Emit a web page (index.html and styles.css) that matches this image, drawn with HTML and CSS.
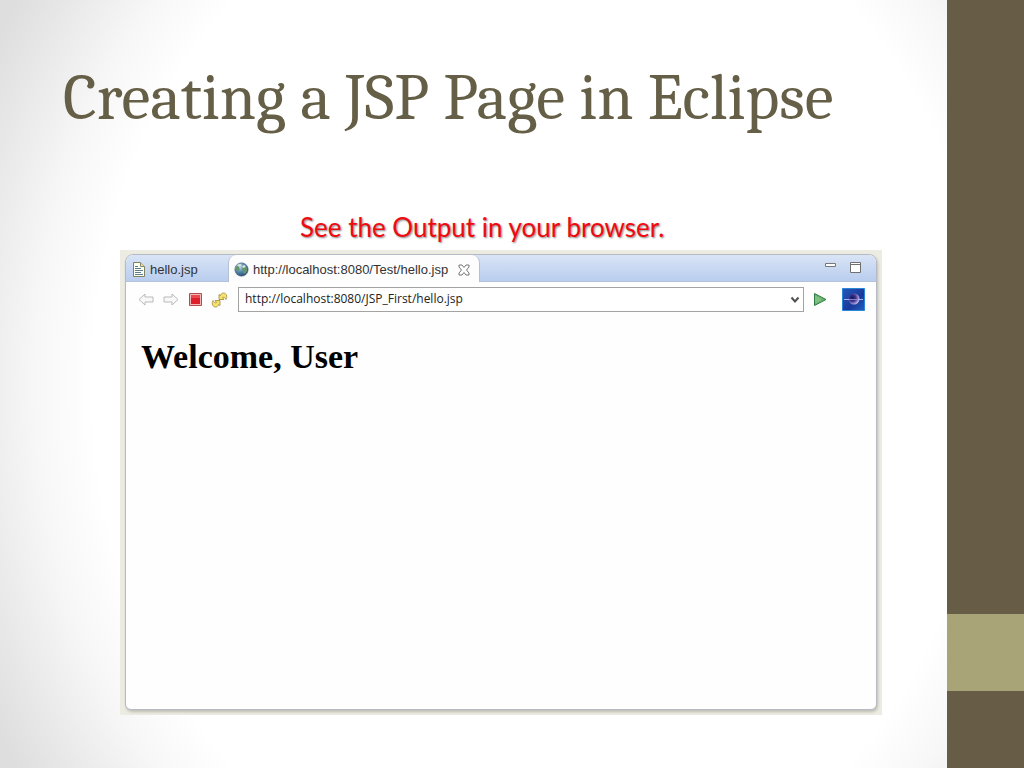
FILE: index.html
```html
<!DOCTYPE html>
<html lang="en">
<head>
    <meta charset="UTF-8">
    <meta name="viewport" content="width=device-width, initial-scale=1.0">
    <title>Creating a JSP Page in Eclipse</title>
    <link rel="stylesheet" href="styles.css">
</head>
<body>

    <div class="slide">
        <main class="content">
            <h1 class="title">Creating a JSP Page in Eclipse</h1>
            <p class="caption">See the Output in your browser.</p>

            <div class="frame">
                <div class="window">
                    <div class="tabs">
                        <button class="tab">
                            <svg width="14" height="16" viewBox="0 0 14 16">
                                <path d="M1.5.5h7l4 4v10h-11z" fill="#fffef0" stroke="#7f8064"/>
                                <path d="M8.5.5v4h4" fill="#e6dca8" stroke="#8b8a6a"/>
                                <path d="M3 4.5h3M3 6.5h6M3 8.5h8M3 10.5h6M3 12.5h8" stroke="#5b7f90"/>
                            </svg>
                            <span>hello.jsp</span>
                        </button>
                        <button class="tab active">
                            <svg width="15" height="15" viewBox="0 0 15 15">
                                <defs>
                                    <radialGradient id="globe" cx="35%" cy="30%" r="75%">
                                        <stop offset="0" stop-color="#c4deed"/>
                                        <stop offset=".5" stop-color="#5788ae"/>
                                        <stop offset="1" stop-color="#23496e"/>
                                    </radialGradient>
                                </defs>
                                <circle cx="7.5" cy="7.5" r="6.7" fill="url(#globe)" stroke="#5d7486" stroke-width=".6"/>
                                <path d="M2 5l2-2 2 1-1 2 1 2-2 1-2-1zM8 6l3-2 2 2v3l-2 3-2-1v-2z" fill="#64966c"/>
                                <path d="M3 3l3-1 2 1-3 2zM8 5l2-2 2 1-2 2z" fill="#dcebdc"/>
                            </svg>
                            <span>http://localhost:8080/Test/hello.jsp</span>
                            <svg class="close" width="12" height="12" viewBox="0 0 12 12">
                                <path d="M1 1h3l2 2.5L8 1h3v2L8.5 6 11 9v2H8L6 8.5 4 11H1V9l2.5-3L1 3z" fill="#fff" stroke="#777"/>
                            </svg>
                        </button>
                        <div class="window-buttons">
                            <button aria-label="Minimize">
                                <svg width="12" height="12" viewBox="0 0 12 12">
                                    <path d="M.5 1.5h10v3H.5z" fill="#fff" stroke="#777"/>
                                </svg>
                            </button>
                            <button aria-label="Maximize">
                                <svg width="12" height="12" viewBox="0 0 12 12">
                                    <path d="M.5.5h10v10H.5z" fill="#fff" stroke="#707070"/>
                                    <path d="M1 2.5h9" stroke="#707070"/>
                                </svg>
                            </button>
                        </div>
                    </div>

                    <div class="toolbar">
                        <button aria-label="Back">
                            <svg width="16" height="14" viewBox="0 0 16 14">
                                <path d="M1 6.5L7 1v3h8v5H7v3z" fill="#f8f8f8" stroke="#b9b9b9"/>
                            </svg>
                        </button>
                        <button aria-label="Forward">
                            <svg width="16" height="14" viewBox="0 0 16 14">
                                <path d="M15 6.5L9 1v3H1v5h8v3z" fill="#f8f8f8" stroke="#b9b9b9"/>
                            </svg>
                        </button>
                        <button aria-label="Stop">
                            <svg width="14" height="14" viewBox="0 0 14 14">
                                <path d="M1.5.5h12v12h-12z" fill="#f3b8b8" stroke="#b44b4b"/>
                                <path d="M3 2h9v9H3z" fill="#dc1f2b"/>
                                <path d="M3 2h9v3H3z" fill="#e94a50"/>
                            </svg>
                        </button>
                        <button aria-label="Refresh">
                            <svg width="18" height="16" viewBox="0 0 18 16">
                                <path d="M8 2.5v5h5l-1.500-2c1.500-.7 2.500 0 3.500 2 1.500-3 .5-6.500-2.500-6.500-1.500 0-2.500.7-3 2.500z" fill="#f7e36c" stroke="#a08a34" stroke-width=".8"/>
                                <path d="M9 13.500v-5H4l1.500 2c-1.500.7-2.500 0-3.500-2-1.500 3-.5 6.500 2.500 6.500 1.500 0 2.500-.7 3-2.500z" fill="#f7e36c" stroke="#a08a34" stroke-width=".8"/>
                            </svg>
                        </button>
                        <div class="address">
                            <select aria-label="Address">
                                <option>http://localhost:8080/JSP_First/hello.jsp</option>
                            </select>
                            <svg width="10" height="8" viewBox="0 0 10 8">
                                <path d="M1.5 1.5l3.5 4 3.5-4" fill="none" stroke="#505050" stroke-width="2"/>
                            </svg>
                        </div>
                        <button aria-label="Go">
                            <svg width="14" height="14" viewBox="0 0 14 14">
                                <path d="M1.5.5l11.5 6-11.5 6z" fill="#67b26e" stroke="#2f7d42"/>
                                <path d="M3 3v7M5 4v5M7 5v3" stroke="#95cf97"/>
                            </svg>
                        </button>
                        <svg class="logo" width="23" height="23" viewBox="0 0 23 23">
                            <defs>
                                <linearGradient id="sky" x1="0" y1="0" x2="1" y2="1">
                                    <stop offset="0" stop-color="#2458ba"/>
                                    <stop offset=".6" stop-color="#1a3a9a"/>
                                    <stop offset="1" stop-color="#1f62c0"/>
                                </linearGradient>
                                <radialGradient id="moon" cx="35%" cy="40%" r="65%">
                                    <stop offset="0" stop-color="#14145c"/>
                                    <stop offset=".5" stop-color="#3f3790"/>
                                    <stop offset="1" stop-color="#c5b8ee"/>
                                </radialGradient>
                            </defs>
                            <path d="M.5.5h22v22H.5z" fill="url(#sky)" stroke="#2c86d8"/>
                            <circle cx="12" cy="11" r="5.5" fill="url(#moon)"/>
                            <path d="M2 11.5h5M16 11.5h5" stroke="#a9b4ee"/>
                            <path d="M7 11.5h9" stroke="#8a7ccb"/>
                        </svg>
                    </div>

                    <div class="page">
                        <h2>Welcome, User</h2>
                    </div>
                </div>
            </div>
        </main>

        <div class="side">
            <div class="band"></div>
        </div>
    </div>

</body>
</html>
```
FILE: styles.css
```css
* {
    box-sizing: border-box;
}

body {
    margin: 0;
    font-family: "Liberation Sans", Arial, sans-serif;
}

.slide {
    display: flex;
    min-height: 100vh;
}

.content {
    flex: 1;
    display: flex;
    flex-direction: column;
    padding: 60px 65px 53px 63px;
    background: radial-gradient(ellipse 62% 90% at 57% 50%, #fff 0%, #fff 76%, #f7f7f7 86%, #dedede 105%);
}

.title {
    margin: 0;
    font-family: Cambria, "Liberation Serif", serif;
    font-size: 65px;
    font-weight: normal;
    line-height: 76px;
    color: #665f47;
}

.caption {
    margin: 75px 0 7px 237px;
    font-family: Lato, sans-serif;
    font-size: 26px;
    line-height: 32px;
    color: #f00a10;
    text-shadow: 1px 1px 2px rgba(0, 0, 0, 0.5);
}

/* Eclipse window */
.frame {
    flex: 1;
    display: flex;
    margin-left: 57px;
    padding: 4px 5px 5px 5px;
    background: #ecece2;
}

.window {
    flex: 1;
    display: flex;
    flex-direction: column;
    border: 1px solid #b5bac4;
    border-radius: 8px 8px 6px 6px;
    background: #fefefe;
    box-shadow: 1px 2px 3px rgba(0, 0, 0, 0.2);
    overflow: hidden;
}

button {
    display: flex;
    align-items: center;
    padding: 0;
    border: none;
    background: none;
    cursor: pointer;
}

.tabs {
    display: flex;
    height: 27px;
    background: linear-gradient(#d9e4f6, #b9cdee);
    border-bottom: 1px solid #b4c2da;
}

.tab {
    gap: 4px;
    width: 102px;
    height: 27px;
    padding: 2px 0 0 6px;
    font-family: "Liberation Sans", Arial, sans-serif;
    font-size: 13px;
    color: #333;
}

.tab.active {
    width: 252px;
    padding-left: 5px;
    border: 1px solid #b5bfd2;
    border-width: 0 1px;
    border-radius: 8px 8px 0 0;
    background: #fdfdfd;
}

.close {
    margin-left: 6px;
}

.window-buttons {
    display: flex;
    align-items: center;
    gap: 13px;
    margin-left: auto;
    padding-right: 14px;
}

.toolbar {
    display: flex;
    align-items: center;
    height: 35px;
    gap: 9px;
    padding: 0 11px 0 12px;
}

.address {
    position: relative;
    flex: 1;
    display: flex;
}

.address select {
    width: 100%;
    height: 25px;
    padding: 0 24px 2px 6px;
    appearance: none;
    border: 1px solid #a3a3a3;
    border-radius: 0;
    background: #fff;
    font-family: "Open Sans", sans-serif;
    font-size: 12px;
    color: #222;
}

.address svg {
    position: absolute;
    right: 4px;
    top: 9px;
    pointer-events: none;
}

.logo {
    margin-left: 6px;
}

.page {
    padding: 20px 15px;
}

.page h2 {
    margin: 0;
    font-family: "Liberation Serif", serif;
    font-size: 34px;
    line-height: 40px;
    color: #000;
}

/* Right hand stripe */
.side {
    display: flex;
    flex-direction: column;
    justify-content: flex-end;
    width: 77px;
    padding-bottom: 77px;
    background: #675c45;
}

.band {
    height: 77px;
    background: #a8a478;
}
```
